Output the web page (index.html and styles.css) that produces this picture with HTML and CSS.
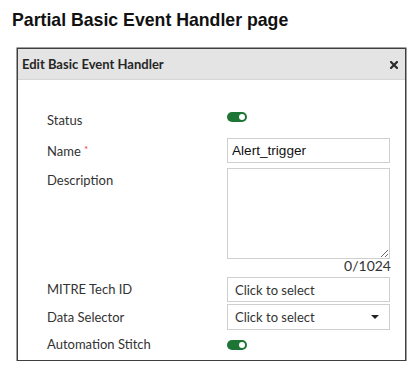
FILE: index.html
```
<!DOCTYPE html>
<html lang="en">

<head>
    <meta charset="UTF-8">
    <meta name="viewport" content="width=device-width, initial-scale=1.0">
    <title>Partial Basic Event Handler page</title>
    <link rel="stylesheet" href="styles.css">
</head>

<body>
    <h1 class="page-title">Partial Basic Event Handler page</h1>

    <div class="dialog">
        <div class="dialog-header">
            <span class="dialog-title">Edit Basic Event Handler</span>
            <svg class="close" width="8" height="8" viewBox="0 0 8 8">
                <path d="M1 1 L7 7 M7 1 L1 7" stroke="#2b2b2b" stroke-width="2.2" stroke-linecap="square" />
            </svg>
        </div>

        <div class="dialog-body">
            <div class="row">
                <label class="label">Status</label>
                <span class="toggle toggle-up"></span>
            </div>
            <div class="row">
                <label class="label">Name <span class="required">*</span></label>
                <input type="text" class="input input-name" value="Alert_trigger">
            </div>
            <div class="row row-top">
                <label class="label">Description</label>
                <div class="field">
                    <textarea class="textarea"></textarea>
                    <div class="counter">0/1024</div>
                </div>
            </div>
            <div class="row row-tight">
                <label class="label">MITRE Tech ID</label>
                <div class="input select">Click to select</div>
            </div>
            <div class="row row-tight">
                <label class="label">Data Selector</label>
                <div class="input select select-drop">
                    Click to select
                    <span class="caret"></span>
                </div>
            </div>
            <div class="row row-last">
                <label class="label">Automation Stitch</label>
                <span class="toggle"></span>
            </div>
        </div>
    </div>
</body>

</html>
```

FILE: styles.css
```
body {
    margin: 0;
    padding: 0;
    background-color: #ffffff;
    font-family: Lato, "Liberation Sans", sans-serif;
    color: #333333;
}

.page-title {
    font-family: "Liberation Sans", Arial, sans-serif;
    font-size: 17.7px;
    font-weight: bold;
    line-height: 20px;
    color: #111111;
    margin: 10px 0 18px 12px;
}

.dialog {
    width: 387px;
    margin-left: 17px;
    border: 1px solid #3f3f3f;
    box-shadow: 0 0 0 0.5px #3f3f3f;
}

.dialog-header {
    display: flex;
    justify-content: space-between;
    align-items: center;
    height: 30px;
    padding: 0 7px 0 4px;
    background-color: #e4e4e4;
    border-bottom: 1px solid #d6d6d6;
}

.dialog-title {
    font-weight: bold;
    font-size: 13px;
    color: #262626;
}

.close {
    display: block;
    margin-top: 1px;
}

.dialog-body {
    padding: 28px 14px 3px 29px;
}

.row {
    display: flex;
    align-items: center;
    margin-bottom: 4px;
}

.row-top {
    align-items: flex-start;
}

.row-tight {
    margin-bottom: 2px;
}

.row-last {
    margin-bottom: 0;
}

.label {
    width: 180px;
    flex: none;
    font-size: 13px;
    line-height: 25px;
    color: #333333;
}

.required {
    color: #e23b4e;
    font-size: 10px;
    vertical-align: 3px;
}

.toggle {
    position: relative;
    display: inline-block;
    width: 20px;
    height: 10px;
    border-radius: 5px;
    background-color: #1d7636;
}

.toggle::after {
    content: "";
    position: absolute;
    top: 2px;
    right: 2px;
    width: 6px;
    height: 6px;
    border-radius: 50%;
    background-color: #ffffff;
}

.toggle-up {
    margin-bottom: 7px;
}

.input {
    box-sizing: border-box;
    width: 163px;
    height: 25px;
    margin: 0;
    border: 1px solid #cfcfcf;
    background-color: #ffffff;
    outline: none;
}

.input-name {
    padding: 0 4px;
    font-family: "Liberation Sans", Arial, sans-serif;
    font-size: 13.6px;
    color: #111111;
}

.select {
    display: flex;
    align-items: center;
    padding: 0 7px;
    font-size: 13px;
    color: #333333;
}

.select-drop {
    justify-content: space-between;
    height: 26px;
}

.caret {
    width: 0;
    height: 0;
    margin-right: 3px;
    border-left: 4px solid transparent;
    border-right: 4px solid transparent;
    border-top: 4px solid #222222;
}

.field {
    width: 163px;
}

.textarea {
    box-sizing: border-box;
    display: block;
    width: 163px;
    height: 91px;
    margin: 0;
    border: 1px solid #cfcfcf;
    outline: none;
}

.counter {
    text-align: right;
    font-size: 14px;
    line-height: 14px;
    color: #333333;
    margin-right: -1px;
}
```
